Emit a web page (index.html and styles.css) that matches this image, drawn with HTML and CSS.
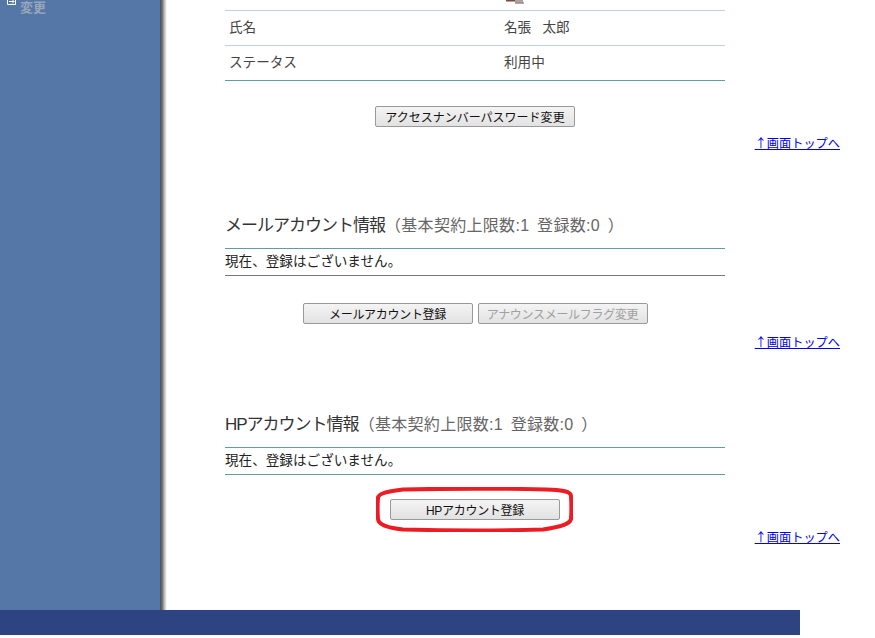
FILE: index.html
```html
<!DOCTYPE html>
<html lang="ja">
<head>
    <meta charset="UTF-8">
    <meta name="viewport" content="width=device-width, initial-scale=1.0">
    <title>アカウント情報</title>
    <link rel="stylesheet" href="styles.css">
</head>
<body>

<div class="page">
    <div class="sidebar">
        <div class="side-link">
            <svg class="side-icon" width="9" height="11" viewBox="0 0 9 11">
                <path d="M0.5 0V10.5H8.5V0M2 7.500H7M5 5.500L7 7.500L5 9.500" fill="none" stroke="#fff"/>
            </svg>
            <span class="side-text">メール パスワード<br>変更</span>
        </div>
    </div>
    <div class="side-shadow"></div>

    <div class="content">
        <div class="stub">
            <svg width="18" height="4" viewBox="0 0 18 4">
                <rect x="0" y="0" width="10" height="1.5" fill="#7a4a4a"/>
                <rect x="9" y="0" width="8" height="2.5" fill="#a9a3a3"/>
                <rect x="9" y="2.5" width="9" height="1" fill="#7a4a4a"/>
            </svg>
        </div>
        <table class="info-table">
            <tr><th>氏名</th><td>名張&nbsp;&nbsp;&nbsp;太郎</td></tr>
            <tr class="last"><th>ステータス</th><td>利用中</td></tr>
        </table>
        <div class="buttons first-buttons">
            <button class="btn btn-access">アクセスナンバーパスワード変更</button>
        </div>
        <div class="top-link first-link"><a href="#">↑画面トップへ</a></div>

        <h2 class="section-title">メールアカウント情報<span class="limits">（基本契約上限数:1 登録数:0 ）</span></h2>
        <div class="notice mail-notice">現在、登録はございません。</div>
        <div class="buttons mail-buttons">
            <button class="btn btn-wide">メールアカウント登録</button>
            <button class="btn btn-wide" disabled>アナウンスメールフラグ変更</button>
        </div>
        <div class="top-link mail-link"><a href="#">↑画面トップへ</a></div>

        <h2 class="section-title">HPアカウント情報<span class="limits">（基本契約上限数:1 登録数:0 ）</span></h2>
        <div class="notice hp-notice">現在、登録はございません。</div>
        <div class="buttons hp-buttons">
            <div class="marked">
                <button class="btn btn-wide">HPアカウント登録</button>
                <!-- red hand drawn ring around the button -->
                <svg class="ring" width="197" height="45" viewBox="0 0 197 45">
                    <path d="M2 11C2 6 14 4 27 2.5C70 1.5 130 1.5 170 2.5C184 3 195 4 195 9C195.500 17 195.500 25 195 32C194 37 185 40 167 42.500C130 43.500 70 43.500 27 42.500C12 41 2.500 38 2 32C1.500 25 1.500 17 2 11Z" fill="none" stroke="#ed1c24" stroke-width="4"/>
                </svg>
            </div>
        </div>
        <div class="top-link hp-link"><a href="#">↑画面トップへ</a></div>
    </div>
</div>

<div class="footer"></div>

</body>
</html>
```

FILE: styles.css
```css
html, body {
    margin: 0;
    height: 638px;
    overflow: hidden;
    background-color: white;
}

body {
    font-family: "Liberation Sans", "Noto Sans CJK JP", sans-serif;
    font-size: 13.6px;
    color: #333;
}

.page {
    display: flex;
    height: 610px;
    overflow: hidden;
}

.sidebar {
    width: 160px;
    flex-shrink: 0;
    background-color: #5477a7;
    overflow: hidden;
}

.side-shadow {
    width: 7px;
    flex-shrink: 0;
    background: linear-gradient(90deg, #4f4f4f, #6a6a6a 30%, #b5b5b5 60%, #f0f0f0 90%, white);
}

.side-link {
    display: flex;
    align-items: flex-start;
    gap: 4px;
    padding-left: 7px;
}

.side-icon {
    flex-shrink: 0;
    margin-top: -6px;
}

.side-text {
    margin-top: -13px;
    font-size: 13px;
    line-height: 14px;
    font-weight: bold;
    white-space: nowrap;
    color: #97a6ba;
}

.content {
    flex: 1;
    padding-left: 58px;
}

.stub {
    width: 219px;
    height: 10px;
    padding-left: 281px;
    border-bottom: 1px solid #c0d0e0;
}

.stub svg {
    display: block;
}

.info-table {
    width: 500px;
    border-collapse: collapse;
}

.info-table th,
.info-table td {
    height: 29px;
    padding: 0 0 5px;
    border-bottom: 1px solid #c0d0e0;
    font-weight: normal;
    text-align: left;
    color: #444;
}

.info-table th {
    width: 275px;
    padding-left: 4px;
}

.info-table .last th,
.info-table .last td {
    border-bottom-color: #5f9ea0;
}

.buttons {
    width: 500px;
    display: flex;
    justify-content: center;
    gap: 5px;
}

.first-buttons {
    margin-top: 25px;
}

.mail-buttons {
    margin-top: 27px;
}

.hp-buttons {
    margin-top: 24px;
}

.btn {
    height: 21px;
    padding: 0 0 1px;
    border: 1px solid #999;
    border-radius: 2px;
    background: linear-gradient(#f4f4f4, #e2e2e2);
    font-family: inherit;
    font-size: 12px;
    letter-spacing: -0.3px;
    white-space: nowrap;
    color: #111;
}

.btn:disabled {
    color: #a0a0a0;
}

.btn-access {
    width: 200px;
    letter-spacing: 0;
}

.btn-wide {
    width: 170px;
    display: block;
}

.marked {
    position: relative;
}

.ring {
    position: absolute;
    left: -14px;
    top: -12px;
}

.top-link {
    margin-right: 35px;
    text-align: right;
    font-family: "Noto Sans CJK JP", sans-serif;
    font-size: 12.2px;
    line-height: 16px;
}

.first-link {
    margin-top: 8px;
}

.mail-link {
    margin-top: 10px;
}

.hp-link {
    margin-top: 9px;
}

.top-link a {
    color: #0000ee;
}

.section-title {
    width: 500px;
    height: 36px;
    margin: 62px 0 0;
    box-sizing: border-box;
    border-bottom: 1px solid #5f9ea0;
    font-size: 17px;
    line-height: 26px;
    font-weight: normal;
    letter-spacing: -1px;
    white-space: nowrap;
    color: #333;
}

.limits {
    font-size: 16px;
    letter-spacing: 0.3px;
    word-spacing: 3px;
    color: #666;
}

.notice {
    width: 500px;
    height: 26px;
    line-height: 26px;
    border-bottom: 1px solid #777;
    color: #222;
}

.hp-notice {
    border-bottom-color: #5f9ea0;
}

.footer {
    width: 800px;
    height: 25px;
    background-color: #2e4482;
}
```
